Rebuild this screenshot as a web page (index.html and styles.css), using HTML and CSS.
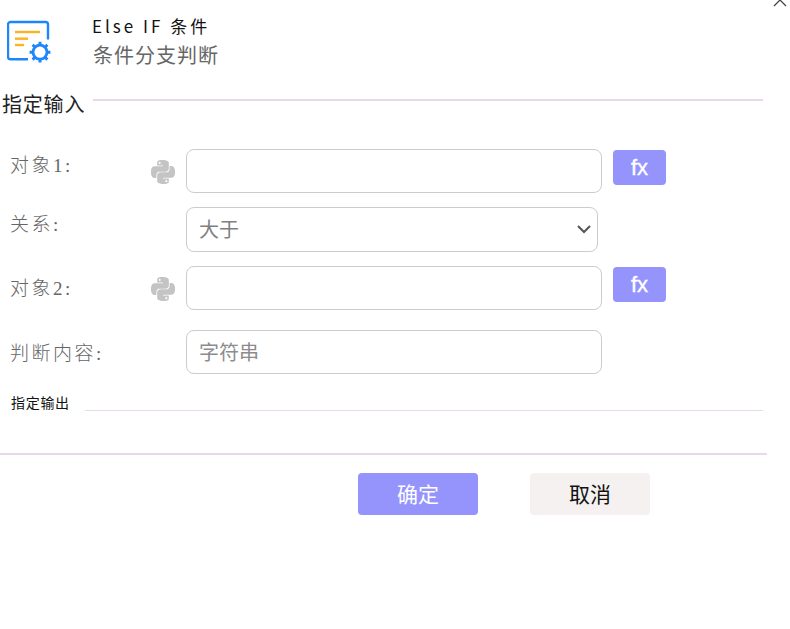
FILE: index.html
```html
<!DOCTYPE html>
<html lang="zh-CN">
<head>
    <meta charset="UTF-8">
    <meta name="viewport" content="width=device-width, initial-scale=1.0">
    <title>Else IF 条件</title>
    <link rel="stylesheet" href="styles.css">
</head>
<body>
    <button class="close" aria-label="关闭">
        <svg width="14" height="14" viewBox="0 0 14 14"><path d="M1 1l12 12M13 1L1 13" fill="none" stroke="#444" stroke-width="1.3"/></svg>
    </button>

    <div class="header">
        <svg class="logo" width="44" height="44" viewBox="0 0 44 44">
            <path d="M21 39.200H3.500a2.500 2.500 0 0 1-2.500-2.500V4.500A2.500 2.500 0 0 1 3.500 2h35a2.500 2.500 0 0 1 2.500 2.500v15" fill="none" stroke="#1e86fb" stroke-width="2.400"/>
            <path d="M8 12h25" stroke="#fbb321" stroke-width="2.400"/>
            <path d="M8 18.700h13" stroke="#fbb321" stroke-width="2.400"/>
            <path d="M8 25h9" stroke="#fbb321" stroke-width="2.400"/>
            <circle cx="33" cy="32.200" r="7" fill="none" stroke="#1e86fb" stroke-width="2.800"/>
            <path d="M33 21.800v3M33 39.600v3M22.600 32.200h3M40.400 32.200h3M25.600 24.800l2.200 2.200M38.200 37.400l2.200 2.200M40.400 24.800l-2.200 2.200M27.800 37.400l-2.200 2.200" stroke="#1e86fb" stroke-width="3"/>
        </svg>
        <div class="header-text">
            <div class="title">Else IF 条件</div>
            <div class="subtitle">条件分支判断</div>
        </div>
    </div>

    <div class="section">
        <span class="section-name">指定输入</span>
        <span class="section-line"></span>
    </div>

    <div class="form">
        <div class="row row-one">
            <label class="label">对象1:</label>
            <svg class="py" width="24" height="24" viewBox="0 0 24 24"><path d="M14.250.180l.900.200.730.260.590.300.450.320.340.340.250.340.160.330.100.300.040.260.020.200-.010.130V8.500l-.050.630-.130.550-.210.460-.260.380-.300.310-.330.250-.350.190-.350.140-.330.100-.300.070-.260.040-.210.020H8.770l-.690.050-.590.140-.500.220-.410.270-.330.320-.270.350-.200.360-.150.370-.100.350-.070.320-.040.270-.020.210v3.060H3.170l-.210-.030-.280-.070-.320-.120-.350-.180-.360-.260-.360-.360-.350-.460-.320-.590-.280-.730-.210-.880-.140-1.050-.050-1.230.060-1.220.160-1.040.240-.870.320-.710.360-.570.400-.440.420-.330.420-.240.400-.160.360-.100.320-.050.240-.010h.160l.060.010h8.160v-.830H6.180l-.010-2.750-.020-.370.050-.340.110-.310.170-.280.250-.260.310-.230.380-.200.440-.180.510-.150.580-.120.640-.100.710-.060.770-.040.840-.020 1.270.050zm-6.300 1.980l-.230.330-.080.410.080.410.230.340.330.220.410.090.410-.090.330-.220.230-.340.080-.410-.080-.410-.230-.330-.330-.220-.410-.090-.410.090zm13.090 3.950l.280.060.320.120.350.180.360.270.360.350.350.470.320.590.280.730.210.880.140 1.040.050 1.230-.060 1.230-.160 1.040-.240.860-.320.710-.360.570-.400.450-.420.330-.420.240-.400.160-.360.090-.320.050-.240.020-.160-.010h-8.220v.820h5.840l.010 2.760.020.360-.050.340-.110.310-.170.290-.250.250-.310.240-.380.200-.440.170-.510.150-.580.130-.640.090-.710.070-.770.040-.840.010-1.270-.040-1.070-.140-.900-.200-.730-.250-.590-.300-.450-.330-.340-.340-.250-.340-.160-.330-.100-.300-.040-.250-.020-.200.010-.130v-5.340l.050-.640.130-.540.210-.460.260-.380.300-.320.330-.240.350-.200.350-.140.330-.100.300-.060.260-.040.210-.020.130-.010h5.840l.690-.050.590-.140.500-.210.410-.280.330-.320.270-.350.200-.360.150-.360.100-.350.070-.320.040-.280.020-.210V6.070h2.090l.140.010zm-6.470 14.250l-.230.330-.080.410.080.410.230.330.330.230.410.080.410-.080.330-.230.230-.330.080-.410-.080-.410-.230-.330-.330-.230-.410-.080-.410.080z"/></svg>
            <input class="field" type="text">
            <button class="fx">fx</button>
        </div>
        <div class="row row-two">
            <label class="label">关系:</label>
            <select class="field field-select">
                <option>大于</option>
            </select>
        </div>
        <div class="row row-three">
            <label class="label">对象2:</label>
            <svg class="py" width="24" height="24" viewBox="0 0 24 24"><path d="M14.250.180l.900.200.730.260.590.300.450.320.340.340.250.340.160.330.100.300.040.260.020.200-.010.130V8.500l-.050.630-.130.550-.210.460-.260.380-.300.310-.330.250-.350.190-.350.140-.330.100-.300.070-.260.040-.210.020H8.770l-.690.050-.590.140-.500.220-.410.270-.330.320-.270.350-.200.360-.150.370-.100.350-.070.320-.040.270-.020.210v3.060H3.170l-.210-.030-.280-.07-.320-.120-.350-.180-.360-.260-.360-.360-.350-.460-.320-.590-.280-.730-.210-.880-.140-1.050-.050-1.230.060-1.220.160-1.040.240-.870.320-.710.360-.570.400-.440.420-.330.420-.240.400-.160.360-.100.320-.050.240-.010h.160l.060.010h8.160v-.830H6.180l-.010-2.750-.020-.370.050-.340.110-.310.170-.280.250-.260.310-.230.380-.200.440-.180.510-.150.580-.120.640-.100.710-.060.770-.040.840-.020 1.270.050zm-6.300 1.980l-.230.330-.080.410.080.410.230.340.330.220.410.090.410-.090.330-.220.230-.340.080-.410-.080-.410-.230-.330-.330-.220-.410-.090-.410.090zm13.090 3.950l.280.060.320.120.350.180.360.270.360.350.350.470.320.590.280.730.210.880.140 1.040.050 1.230-.060 1.230-.160 1.040-.240.860-.320.710-.360.570-.400.450-.420.330-.420.240-.400.160-.360.090-.320.050-.240.020-.160-.010h-8.220v.820h5.840l.010 2.760.020.360-.050.340-.110.310-.170.290-.250.250-.310.240-.380.200-.440.170-.510.150-.580.130-.640.090-.710.070-.770.040-.840.010-1.270-.040-1.070-.140-.900-.200-.730-.250-.590-.300-.450-.330-.340-.340-.250-.340-.160-.330-.100-.300-.040-.250-.020-.200.010-.130v-5.340l.050-.640.130-.540.210-.460.260-.380.300-.320.330-.240.350-.200.350-.140.330-.100.300-.060.260-.040.210-.020.130-.010h5.840l.690-.050.590-.140.500-.210.410-.280.330-.320.270-.350.200-.360.150-.360.100-.350.070-.320.040-.280.020-.210V6.070h2.090l.140.010zm-6.470 14.250l-.230.330-.080.410.080.410.230.330.330.230.410.080.410-.080.330-.230.230-.330.080-.410-.080-.410-.230-.330-.330-.230-.410-.080-.410.080z"/></svg>
            <input class="field" type="text">
            <button class="fx">fx</button>
        </div>
        <div class="row row-four">
            <label class="label">判断内容:</label>
            <input class="field" type="text" placeholder="字符串">
        </div>
    </div>

    <div class="section section-small">
        <span class="section-name">指定输出</span>
        <span class="section-line"></span>
    </div>

    <div class="footer">
        <button class="btn btn-ok">确定</button>
        <button class="btn btn-cancel">取消</button>
    </div>
</body>
</html>
```

FILE: styles.css
```css
body {
    margin: 0;
    height: 629px;
    overflow: hidden;
    background-color: white;
    font-family: "Noto Sans CJK SC", sans-serif;
}
.close {
    position: absolute;
    top: -7px;
    left: 773px;
    padding: 0;
    border: none;
    background: none;
}
.header {
    display: flex;
    padding: 13px 0 0 7px;
    height: 88px;
    box-sizing: border-box;
}
.logo {
    margin-top: 7px;
}
.header-text {
    margin-left: 41px;
}
.title {
    font-size: 17px;
    line-height: 25px;
    letter-spacing: 3px;
    color: #111;
}
.subtitle {
    margin-top: 3px;
    margin-left: 1px;
    font-size: 20px;
    line-height: 28px;
    letter-spacing: 1px;
    color: #666;
}
.section {
    display: flex;
    align-items: center;
    width: 763px;
    height: 32px;
    padding-left: 2px;
    box-sizing: border-box;
}
.section-name {
    margin-top: -2px;
    font-size: 20px;
    letter-spacing: 0.8px;
    color: #222;
}
.section-line {
    flex: 1;
    height: 2px;
    margin: -8px 0 0 8px;
    background-color: #e8d8ea;
}
.form {
    padding: 29px 0 0 10px;
}
.row {
    display: flex;
    align-items: flex-start;
}
.row-two {
    margin-top: 14px;
}
.row-three {
    margin-top: 14px;
}
.row-four {
    margin-top: 20px;
}
.label {
    width: 141px;
    padding-top: 2px;
    font-family: "Liberation Serif", "Noto Sans CJK SC", serif;
    font-size: 19px;
    font-weight: 300;
    line-height: 30px;
    letter-spacing: 2.500px;
    color: #666;
}
.row-two .label {
    width: 176px;
    padding-top: 3px;
}
.row-three .label {
    padding-top: 8px;
}
.row-four .label {
    width: 176px;
    padding-top: 9px;
}
.py {
    margin: 11px 11px 0 0;
    fill: #c4c4c4;
}
.field {
    width: 416px;
    height: 44px;
    padding: 0 12px 2px;
    box-sizing: border-box;
    border: 1px solid #ccc;
    border-radius: 8px;
    background-color: white;
    font-family: "Noto Sans CJK SC", sans-serif;
    font-size: 20px;
    line-height: 40px;
    color: #808080;
}
.field::placeholder {
    color: #8c8c8c;
}
.field-select {
    width: 412px;
    height: 45px;
    appearance: none;
    background-image: url("data:image/svg+xml,%3Csvg xmlns='http://www.w3.org/2000/svg' width='14' height='9'%3E%3Cpath d='M1 1l6 6 6-6' fill='none' stroke='%23555' stroke-width='2'/%3E%3C/svg%3E");
    background-repeat: no-repeat;
    background-position: right 6px center;
}
.fx {
    width: 53px;
    height: 35px;
    margin: 1px 0 0 11px;
    border: none;
    border-radius: 4px;
    background-color: #9494fc;
    color: white;
    font-family: "Liberation Sans", sans-serif;
    font-size: 22px;
    -webkit-text-stroke: 0.4px white;
}
.section-small {
    height: 20px;
    margin-top: 18px;
    padding-left: 11px;
}
.section-small .section-name {
    margin-top: 0;
    font-size: 14px;
    letter-spacing: 0.700px;
    color: #111;
}
.section-small .section-line {
    height: 1px;
    margin: 16px 0 0 15px;
}
.footer {
    display: flex;
    gap: 52px;
    width: 767px;
    margin-top: 41px;
    padding: 18px 0 0 358px;
    box-sizing: border-box;
    border-top: 2px solid #e8d8ea;
}
.btn {
    width: 120px;
    height: 42px;
    padding: 0 0 2px;
    border: none;
    border-radius: 4px;
    font-family: "Noto Sans CJK SC", sans-serif;
    font-size: 21px;
}
.btn-ok {
    background-color: #9494fc;
    color: white;
}
.btn-cancel {
    background-color: #f4f1f0;
    color: #111;
}
```
